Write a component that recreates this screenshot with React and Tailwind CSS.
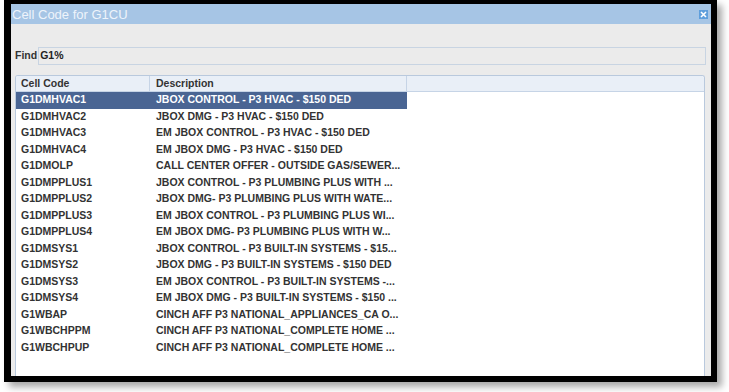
import React from "react"

const rows = [
  ["G1DMHVAC1", "JBOX CONTROL - P3 HVAC - $150 DED"],
  ["G1DMHVAC2", "JBOX DMG - P3 HVAC - $150 DED"],
  ["G1DMHVAC3", "EM JBOX CONTROL - P3 HVAC - $150 DED"],
  ["G1DMHVAC4", "EM JBOX DMG - P3 HVAC - $150 DED"],
  ["G1DMOLP", "CALL CENTER OFFER - OUTSIDE GAS/SEWER..."],
  ["G1DMPPLUS1", "JBOX CONTROL - P3 PLUMBING PLUS WITH ..."],
  ["G1DMPPLUS2", "JBOX DMG- P3 PLUMBING PLUS WITH WATE..."],
  ["G1DMPPLUS3", "EM JBOX CONTROL - P3 PLUMBING PLUS WI..."],
  ["G1DMPPLUS4", "EM JBOX DMG- P3 PLUMBING PLUS WITH W..."],
  ["G1DMSYS1", "JBOX CONTROL - P3 BUILT-IN SYSTEMS - $15..."],
  ["G1DMSYS2", "JBOX DMG - P3 BUILT-IN SYSTEMS - $150 DED"],
  ["G1DMSYS3", "EM JBOX CONTROL - P3 BUILT-IN SYSTEMS -..."],
  ["G1DMSYS4", "EM JBOX DMG - P3 BUILT-IN SYSTEMS - $150 ..."],
  ["G1WBAP", "CINCH AFF P3 NATIONAL_APPLIANCES_CA O..."],
  ["G1WBCHPPM", "CINCH AFF P3 NATIONAL_COMPLETE HOME ..."],
  ["G1WBCHPUP", "CINCH AFF P3 NATIONAL_COMPLETE HOME ..."],
]

export default function App() {
  const [selected, setSelected] = React.useState(0)

  return (
    <div className="w-[729px] h-[392px] bg-white pl-[4px] overflow-hidden" style={{ fontFamily: '"Liberation Sans", Arial, sans-serif' }}>
      <div className="w-[713px] h-[382px] flex flex-col border-l-[7px] border-t-4 border-r-[6px] border-b-[6px] border-black bg-[#ebebeb] shadow-[5px_5px_7px_rgba(0,0,0,0.35)]">
        {/* Title bar */}
        <div className="h-[20px] shrink-0 bg-[#a6c5e5] flex items-center justify-between pl-[1px] pr-[3px]">
          <span className="text-[13px] text-[#eef4fb] leading-none">Cell Code for G1CU</span>
          <div className="w-[9px] h-[9px] bg-[#5f9fdc] flex items-center justify-center">
            <svg width="7" height="7" viewBox="0 0 7 7">
              <path d="M1 1 L6 6 M6 1 L1 6" stroke="#ffffff" strokeWidth="1.6" />
            </svg>
          </div>
        </div>

        {/* Body */}
        <div className="flex-1 flex flex-col pl-[4px] pr-[5px] pt-[23px] min-h-0">
          <div className="flex items-center h-[18px] gap-[1px]">
            <span className="text-[10.5px] font-bold text-[#333333]">Find</span>
            <div className="flex-1 h-[18px] border border-[#c8d4e2] bg-[#ebebeb] flex items-center pl-[1px]">
              <span className="text-[10.5px] font-bold text-[#222222]">G1%</span>
            </div>
          </div>

          <div className="mt-[10px] mr-[1px] flex-1 bg-white border border-b-0 border-[#b9c9dd] rounded-t-[3px] overflow-hidden">
            <div className="flex h-[16px] bg-[#e9eff7] border-b border-[#c6d4e6] text-[10.5px] font-bold text-[#333333]">
              <div className="w-[134px] pl-[5px] flex items-center border-r border-[#c6d4e6]">Cell Code</div>
              <div className="w-[257px] pl-[6px] flex items-center border-r border-[#c6d4e6]">Description</div>
              <div className="flex-1" />
            </div>
            {rows.map(([code, desc], i) => (
              <div key={code} onClick={() => setSelected(i)} className={`flex w-[391px] h-[16.5px] text-[10.5px] font-bold ${selected === i ? "bg-[#4a6593] text-white" : "text-[#333333]"}`}>
                <div className="w-[134px] pl-[5px] flex items-center">{code}</div>
                <div className="w-[257px] pl-[6px] flex items-center whitespace-nowrap">{desc}</div>
              </div>
            ))}
          </div>
        </div>
      </div>
    </div>
  )
}
